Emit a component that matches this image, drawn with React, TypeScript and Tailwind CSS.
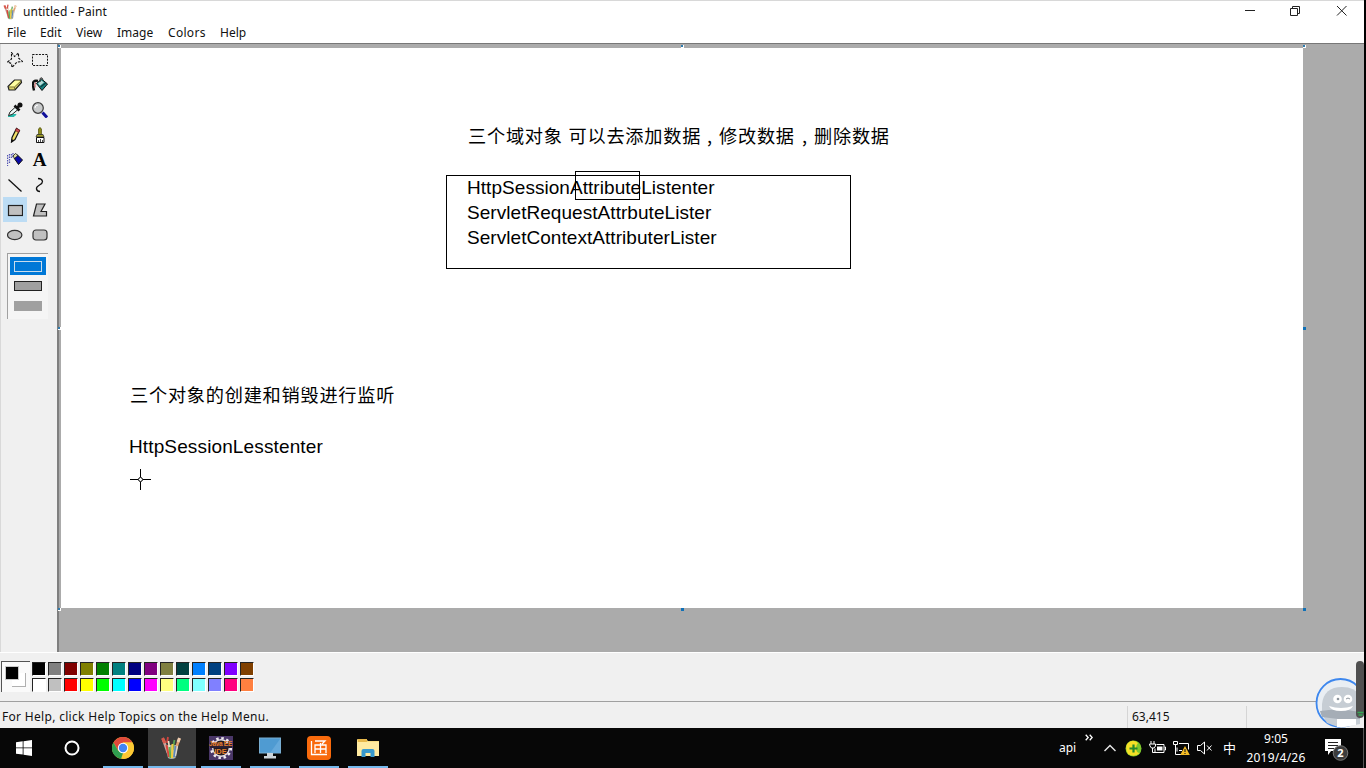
import React from "react";

const ui = "font-['Noto_Sans','Noto_Sans_CJK_SC',sans-serif]";

const swatches: [string, string][] = [
  ["#000000", "#ffffff"],
  ["#808080", "#c0c0c0"],
  ["#800000", "#ff0000"],
  ["#808000", "#ffff00"],
  ["#008000", "#00ff00"],
  ["#008080", "#00ffff"],
  ["#000080", "#0000ff"],
  ["#800080", "#ff00ff"],
  ["#808040", "#ffff80"],
  ["#004040", "#00ff80"],
  ["#0080ff", "#80ffff"],
  ["#004080", "#8080ff"],
  ["#8000ff", "#ff0080"],
  ["#804000", "#ff8040"],
];

function PaintLogo({ size }: { size: number }) {
  return (
    <svg width={size} height={size} viewBox="0 0 24 24" fill="none">
      <path d="M6 9h13l-2.500 13q-4 2-7.500 0z" fill="#a9b3ab" />
      <path d="M4 3l5 14" stroke="#c9a59c" strokeWidth="2.600" />
      <path d="M3.500 2l2.500 5" stroke="#d9584a" strokeWidth="3" />
      <path d="M9 1l-1 6" stroke="#d0443f" strokeWidth="1.800" />
      <path d="M9.500 5l1.500 12" stroke="#e9e2c8" strokeWidth="1.600" />
      <path d="M20.500 2.500l-4 11" stroke="#e0a070" strokeWidth="2.600" />
      <path d="M20.500 2l-1.500 4" stroke="#f0cdb0" strokeWidth="3" />
      <path d="M15.500 4l-2 10" stroke="#59a352" strokeWidth="1.800" />
      <path d="M7.500 9l2.500 12" stroke="#d9463c" strokeWidth="2" />
      <path d="M10.500 11l1 11" stroke="#5eb052" strokeWidth="2" />
      <path d="M13.500 8l-.5 14" stroke="#f0cc3f" strokeWidth="2" />
      <path d="M16.500 10l-1.500 11" stroke="#5a86ba" strokeWidth="1.600" />
      <path d="M18.500 10l-2 10" stroke="#dcd7cf" strokeWidth="1.300" />
    </svg>
  );
}

const tools: { name: string; art: React.ReactNode }[] = [
  {
    name: "Free-form select",
    art: (
      <path d="M4.500 .5L7.500 4.500 11.500 1V6L15.500 9.500 10 10 5 15.500 4.500 11.500.5 10 4.500 7z" fill="none" stroke="#111" strokeWidth="1.100" strokeDasharray="2.500 1.300" />
    ),
  },
  { name: "Select", art: <rect x=".5" y="2.500" width="15" height="11" fill="none" stroke="#111" strokeDasharray="2 1.200" /> },
  {
    name: "Eraser",
    art: (
      <>
        <path d="M1 9.500L7.500 3h6.500l.5 2.500L8 13H2z" fill="#dcd36a" stroke="#222" strokeWidth="1.200" />
        <path d="M2 9.500L8 3.700h5.500L7.500 9.500z" fill="#ffffa0" />
        <path d="M2 10h5.500L14 4M7.500 10v2.500" fill="none" stroke="#6c6730" strokeWidth=".8" />
      </>
    ),
  },
  {
    name: "Fill",
    art: (
      <>
        <path d="M4.500 6.500L9.500 2l6 5-5.500 6.500z" fill="#168080" stroke="#111" />
        <path d="M6 6.500l3.500-3 2.500 2-4 3.200z" fill="#b8dcd8" />
        <path d="M8.500 10l5.500-4.300" stroke="#0a3c3c" strokeWidth="1.200" />
        <path d="M8 5V1.500q2-2 3 1" fill="none" stroke="#333" />
        <path d="M6 4Q0 2.500 1 9l1 4.500" fill="none" stroke="#111" strokeWidth="2.400" />
        <path d="M3.500 5.500q-1 2-.5 5" stroke="#b64040" fill="none" />
      </>
    ),
  },
  {
    name: "Pick color",
    art: (
      <>
        <path d="M1 14.500h6l2-2H4z" fill="#26baaa" stroke="#26baaa" />
        <path d="M1.500 13.500l1.500-3.500 5.500-5 2.500 2.500-6 5z" fill="#eefaf8" stroke="#222" />
        <path d="M7.500 3.500l5 5M10 6l3-3" stroke="#111" strokeWidth="2.600" />
        <circle cx="13" cy="3" r="2.500" fill="#111" />
      </>
    ),
  },
  {
    name: "Magnifier",
    art: (
      <>
        <path d="M10.500 10.500l4.500 5" stroke="#10109a" strokeWidth="3" />
        <circle cx="6" cy="6" r="5.300" fill="#c9cbcc" stroke="#3d3d3d" strokeWidth="1.200" />
        <path d="M3 6q0-3 3-3" stroke="#fff" fill="none" />
      </>
    ),
  },
  {
    name: "Pencil",
    art: (
      <>
        <path d="M5 10.500l4.500-9 3 2-4.500 9-3.500 2.500z" fill="#f2e06a" stroke="#111" strokeWidth="1.200" />
        <path d="M9.500 1.500l3 1.500-1 2.500-3-2z" fill="#d5575d" stroke="#7c1a20" strokeWidth=".8" />
        <path d="M4 15.500l.5-3.500 2.500 1.500z" fill="#111" />
      </>
    ),
  },
  {
    name: "Brush",
    art: (
      <>
        <path d="M6.700 8V2q1.300-3 2.600 0v6z" fill="#9c9a20" stroke="#5a590e" />
        <path d="M5 7.500h6l1 2.500H4z" fill="#a5a32a" stroke="#333" strokeWidth=".8" />
        <path d="M4.500 10.500h7.500V15.500H4.500z" fill="#fff" stroke="#111" />
        <path d="M6.500 13v2M8.500 12v3M10.500 13v2" stroke="#222" strokeWidth=".8" />
      </>
    ),
  },
  {
    name: "Airbrush",
    art: (
      <>
        <path d="M.5 3v11M2.500 2v9M4.500 2v5M6 1v5" stroke="#5556b4" strokeWidth="1.300" strokeDasharray="1.500 1" />
        <path d="M7 6l3.500-3 5 5-4 4.500z" fill="#0909a8" stroke="#111" />
        <path d="M6 4l2.500-2.500 2.500 2-3.500 3z" fill="#d8d9a5" stroke="#111" strokeWidth=".8" />
      </>
    ),
  },
  {
    name: "Text",
    art: null,
  },
  { name: "Line", art: <path d="M1.500 2.500l13 12" stroke="#111" strokeWidth="1.300" /> },
  { name: "Curve", art: <path d="M6 1.500q4 0 4.500 3 0 2-3 3.500-3.500 2-3 4 .5 2.500 3.500 2.500" fill="none" stroke="#111" strokeWidth="1.300" /> },
  { name: "Rectangle", art: <rect x="1.500" y="3.500" width="14" height="10" fill="#c0c0c0" stroke="#222" strokeWidth="1.200" /> },
  { name: "Polygon", art: <path d="M4.500 2h8.500l-4 7.500h5.500V14H1.500z" fill="#c0c0c0" stroke="#222" strokeWidth="1.200" /> },
  { name: "Ellipse", art: <ellipse cx="7.700" cy="8" rx="7.200" ry="4.700" fill="#c0c0c0" stroke="#333" strokeWidth="1.200" /> },
  { name: "Rounded rectangle", art: <rect x="1" y="3" width="14" height="10" rx="3" fill="#c0c0c0" stroke="#333" strokeWidth="1.200" /> },
];

function Toolbox() {
  return (
    <aside className="flex w-[57px] shrink-0 flex-col border-l border-[#d9d9d9] bg-[#f0f0f0] pt-[3px]">
      <div className="ml-[2px] grid w-[50px] grid-cols-[24px_25px] auto-rows-[25px]">
        {tools.map((t) => (
          <div
            key={t.name}
            title={t.name}
            className={
              t.name === "Rectangle"
                ? "flex items-center justify-center bg-[#bcdcf4]"
                : "flex items-center justify-center"
            }
          >
            {t.name === "Text" ? (
              <span className="font-['Liberation_Serif',serif] text-[19px] font-bold leading-[24px] text-[#050505]">A</span>
            ) : (
              <svg width="16" height="16" viewBox="0 0 16 16">
                {t.art}
              </svg>
            )}
          </div>
        ))}
      </div>
      <div className="ml-[6px] mt-[6px] flex h-[66px] w-[41px] flex-col items-center border-l border-t border-[#a0a0a0] bg-[#f5f5f5] pt-[3px]">
        <div className="flex h-[18px] w-[36px] items-center justify-center bg-[#0078d7]">
          <div className="h-[11px] w-[28px] border border-[#c9dcec]" />
        </div>
        <div className="mt-[6px] h-[10px] w-[28px] border border-[#222] bg-[#a0a0a0]" />
        <div className="mt-[10px] h-[10px] w-[28px] bg-[#a0a0a0]" />
      </div>
    </aside>
  );
}

function Canvas() {
  const latin = "absolute whitespace-pre font-['Liberation_Sans',sans-serif] text-[19px] leading-[25px] text-black";
  const cjk = "absolute whitespace-pre font-['Noto_Sans_CJK_SC',sans-serif] text-[18.2px] leading-[25px] text-black tracking-[0.75px]";
  return (
    <main className="relative min-w-0 flex-1 border-l-2 border-[#7f7f7f] bg-[#ababab] pl-[2px] pt-[4px]">
      <div className="relative h-[560px] w-[1242px] bg-white">
        <p className={`${cjk} left-[407px] top-[75px]`}>三个域对象 <span className="ml-px">可以去添加数据</span></p>
        <p className={`${cjk} left-[646px] top-[75px]`}>,</p>
        <p className={`${cjk} left-[658px] top-[75px]`}>修改数据</p>
        <p className={`${cjk} left-[741px] top-[75px]`}>,</p>
        <p className={`${cjk} left-[753px] top-[75px]`}>删除数据</p>
        <div className="absolute left-[385px] top-[127px] h-[94px] w-[405px] border border-black" />
        <div className="absolute left-[514px] top-[123px] h-[29px] w-[65px] border border-black" />
        <div className={`${latin} left-[406px] top-[127px] tracking-[0.05px]`}>
          <p>HttpSessionAttributeListenter</p>
          <p>ServletRequestAttrbuteLister</p>
          <p>ServletContextAttributerLister</p>
        </div>
        <p className={`${cjk} left-[69px] top-[334px]`}>三个对象的创建和销毁进行监听</p>
        <p className={`${latin} left-[68px] top-[386px] tracking-[0.13px]`}>HttpSessionLesstenter</p>
        <svg className="absolute left-[68px] top-[421px]" width="23" height="22" viewBox="0 0 23 22">
          <path d="M1 10.500h8M14 10.500h8M11.500 0v8M11.500 13v8" stroke="#000" />
          <circle cx="11.500" cy="10.500" r="2" fill="#fff" stroke="#000" />
        </svg>
        <i className="absolute -left-[3px] -top-[3px] size-[3px] border-b border-r border-white bg-[#2f7cae]" />
        <i className="absolute left-[620px] -top-[3px] size-[3px] border-b border-r border-white bg-[#2f7cae]" />
        <i className="absolute left-[1242px] -top-[3px] size-[3px] border-b border-r border-white bg-[#2f7cae]" />
        <i className="absolute -left-[3px] top-[279px] size-[3px] border-b border-r border-white bg-[#2f7cae]" />
        <i className="absolute left-[1242px] top-[279px] size-[3px] bg-[#0f70b7]" />
        <i className="absolute -left-[3px] top-[560px] size-[3px] border-b border-r border-white bg-[#2f7cae]" />
        <i className="absolute left-[620px] top-[560px] size-[3px] bg-[#0f70b7]" />
        <i className="absolute left-[1242px] top-[560px] size-[3px] bg-[#0f70b7]" />
      </div>
    </main>
  );
}

function Palette() {
  return (
    <section className="relative flex h-[49px] shrink-0 border-t border-white bg-[#f0f0f0] pl-px pt-[8px]">
      <div className="relative h-[31px] w-[29px] border-l border-t border-[#555] bg-[#fafafa]">
        <div className="absolute left-[10px] top-[11px] size-[14px] border-b border-r border-[#b0b0b0] bg-white" />
        <div className="absolute left-[3px] top-[4px] size-[14px] border border-[#c8c8c8] bg-black" />
      </div>
      <div className="ml-[2px] flex gap-[2px]">
        {swatches.map(([a, b]) => (
          <div key={a} className="flex flex-col gap-[2px] pt-px">
            <div className="size-[14px] border-b border-l border-r border-t border-b-white border-l-[#222] border-r-white border-t-[#222]" style={{ background: a }} />
            <div className="size-[14px] border-b border-l border-r border-t border-b-white border-l-[#222] border-r-white border-t-[#222]" style={{ background: b }} />
          </div>
        ))}
      </div>
    </section>
  );
}

function Assistant() {
  return (
    <div className="absolute left-[1314px] top-[660px] h-[68px] w-[50px] overflow-hidden">
      <svg width="50" height="68" viewBox="0 0 50 68">
        <circle cx="26.500" cy="43" r="24" fill="#e9eef3" stroke="#3d87ee" strokeWidth="1.800" />
        <path d="M8 54V44q2-17 20-17 13 0 18 9v28l-19 4-14-5z" fill="#c6cdd4" />
        <path d="M6 51q20-3 40 1v7H32l-8 0-16-2z" fill="#a5adb6" />
        <path d="M15 46q12 4 24 0-2 5-12 5-10 0-12-5z" fill="#fff" />
        <circle cx="23.500" cy="39" r="4.300" fill="#fff" />
        <circle cx="34" cy="39" r="4.300" fill="#fff" />
        <circle cx="24" cy="39" r="1.300" fill="#8b949c" />
        <path d="M32 39q2-2 4 0" stroke="#8b949c" fill="none" />
        <path d="M23 59h19v6l-12 2h-7z" fill="#fff" />
        <rect x="42" y="1" width="8" height="57" rx="4" fill="#505050" />
        <path d="M43.500 52.500h6M44.500 55h4" stroke="#34a853" strokeWidth="1.300" />
      </svg>
    </div>
  );
}

function TaskButton({ children, open, active, wide }: { children: React.ReactNode; open?: boolean; active?: boolean; wide?: boolean }) {
  const width = wide ? "w-[50px]" : active ? "w-[48px] bg-[#3b3b3b] pr-[2px]" : "w-[49px]";
  return (
    <div className={`relative flex h-full items-center justify-center ${width}`}>
      {children}
      {open && (
        <div
          className={
            active ? "absolute bottom-0 left-0 h-[2px] w-full bg-[#76b9ed]" : "absolute bottom-0 left-[5px] h-[2px] w-[40px] bg-[#76b9ed]"
          }
        />
      )}
    </div>
  );
}

function Taskbar() {
  return (
    <footer className="relative flex h-[40px] shrink-0 items-center bg-[#070707] text-white">
      <div className="flex h-full w-[48px] items-center justify-center">
        <svg width="16" height="16" viewBox="0 0 16 16" fill="#fff">
          <path d="M0 2.300L6.700 1.300V7.500H0zM7.500 1.200L16 0V7.500H7.500zM0 8.300H6.700V14.600L0 13.700zM7.500 8.300H16V16L7.500 14.800z" />
        </svg>
      </div>
      <div className="flex h-full w-[50px] items-center justify-center pr-[2px]">
        <svg width="16" height="16" viewBox="0 0 16 16">
          <circle cx="8" cy="8" r="6.500" fill="none" stroke="#fff" strokeWidth="2" />
        </svg>
      </div>
      <TaskButton open wide>
        <svg width="22" height="22" viewBox="0 0 22 22">
          <circle cx="11" cy="11" r="11" fill="#fcc934" />
          <path d="M1.500 5.500A11 11 0 0 1 20.500 5.500H11L6.200 13.700z" fill="#e04a3b" />
          <path d="M1.500 5.500L6.200 13.700 11 16l-2 6A11 11 0 0 1 1.500 5.500z" fill="#2f9e4f" />
          <path d="M20.500 5.500H11l5 8.200L11 22A11 11 0 0 0 20.500 5.500z" fill="#fcc934" />
          <circle cx="11" cy="11" r="5.200" fill="#fff" />
          <circle cx="11" cy="11" r="4.200" fill="#4285f4" />
        </svg>
      </TaskButton>
      <TaskButton open active>
        <PaintLogo size={24} />
      </TaskButton>
      <TaskButton open>
        <div className="relative size-[24px]">
          <svg width="24" height="24" viewBox="0 0 24 24">
            <rect width="24" height="24" fill="#4a3768" />
            <circle cx="12" cy="12" r="9.800" fill="none" stroke="#f1edf0" strokeWidth="2.600" strokeDasharray="2.500 2.630" />
            <circle cx="12" cy="12" r="8.300" fill="#221b22" stroke="#e6e0e6" strokeWidth="1.400" />
            <path d="M1 7h22v5H1z" fill="#2c1f33" />
          </svg>
          <div className="absolute left-0 top-[4px] flex w-[24px] flex-col items-center whitespace-nowrap font-['Liberation_Sans',sans-serif] text-[6.5px] font-bold leading-[8px] text-[#e8812e]">
            <span className="tracking-[-0.3px]">Java EE</span>
            <span className="text-[7.5px]">IDE</span>
          </div>
        </div>
      </TaskButton>
      <TaskButton open>
        <svg width="22" height="22" viewBox="0 0 22 22">
          <rect x=".5" y="1" width="21" height="15" fill="#4f9bd2" stroke="#79aed2" />
          <path d="M11 16L21 2v14z" fill="#65a9db" />
          <path d="M8 16h6v3h3v2.500H5V19h3z" fill="#cbd3d9" />
        </svg>
      </TaskButton>
      <TaskButton open>
        <svg width="24" height="24" viewBox="0 0 24 24">
          <rect width="24" height="24" rx="4" fill="#f96a0c" />
          <path d="M8 5h10l-3 3M4.500 5v13.500H20M8 17V9h11v8M8 13h11M13.500 7v10" fill="none" stroke="#fff" strokeWidth="1.300" />
        </svg>
      </TaskButton>
      <TaskButton open>
        <svg width="22" height="20" viewBox="0 0 22 20">
          <path d="M0 2q0-1 1-1h8l2 2h11v15H0z" fill="#f8dc83" />
          <path d="M1 1h9v3H1z" fill="#e7b84b" />
          <path d="M0 4h22v14H0z" fill="#ffeaa0" />
          <path d="M4.500 19v-6q0-2 2-2h9q2 0 2 2v6h-4v-4h-5v4z" fill="#3899cd" />
        </svg>
      </TaskButton>
      <div className={`ml-auto flex h-full items-center text-[12px] ${ui}`}>
        <span className="w-[26px] leading-none">api</span>
        <svg className="mb-[21px]" width="8" height="7" viewBox="0 0 8 7">
          <path d="M.7.7l2.500 2.800L.7 6.300M4.700.7l2.500 2.800-2.500 2.800" fill="none" stroke="#fff" strokeWidth="1.300" />
        </svg>
        <svg className="ml-[11px]" width="12" height="8" viewBox="0 0 12 8">
          <path d="M.5 7L6 1.500 11.500 7" fill="none" stroke="#e8e8e8" strokeWidth="1.400" />
        </svg>
        <svg className="ml-[9px]" width="17" height="17" viewBox="0 0 17 17">
          <circle cx="8.500" cy="8.500" r="8" fill="#7dc82c" />
          <path d="M2 4q5-6 11-1-2 2-2 5 0 5 4 5-6 5-12 1-3-5-1-10z" fill="#f5df26" />
          <path d="M8.500 4.500v8M4.500 8.500h8" stroke="#25892b" strokeWidth="2.200" />
        </svg>
        <svg className="ml-[7px]" width="17" height="14" viewBox="0 0 17 14" fill="none" stroke="#fff">
          <path d="M2 0v3M5 0v3M.5 3h6v2l-1.500 2H2.500L1 5zM3.500 7v4.500H6" />
          <path d="M7.500 3.500h7.500v8H6v-4M15.500 6h1v3h-1" />
          <path d="M8 5.500h5.500v4H8z" fill="#fff" stroke="none" />
        </svg>
        <svg className="ml-[7px]" width="17" height="15" viewBox="0 0 17 15" fill="none">
          <path d="M6 2.500h9.500v6M6 9.500h3M.5.500h4v3h-4zM2.500 4v9.500H9M4 6.500v4" stroke="#fff" />
          <path d="M12 5l4.800 9H7.200z" fill="#f4bc25" />
          <path d="M12 8v3M12 12v1" stroke="#222" strokeWidth="1.200" />
        </svg>
        <svg className="ml-[7px]" width="16" height="14" viewBox="0 0 16 14" fill="none" stroke="#fff">
          <path d="M.5 4.500h3L7.500 1v12L3.500 9.500h-3zM10 4.500l4.500 5M14.500 4.500l-4.500 5" />
        </svg>
        <span className="ml-[10px] w-[13px] text-[13px] leading-none">中</span>
        <div className="ml-[7px] flex w-[66px] flex-col items-center whitespace-nowrap text-[12px] leading-[19px]">
          <span>9:05</span>
          <span className="tracking-[0.25px]">2019/4/26</span>
        </div>
        <svg className="ml-[15px] mr-[12px]" width="27" height="26" viewBox="0 0 27 26">
          <path d="M1 4h16v12H7l-3 4v-4H1z" fill="#fff" />
          <path d="M4 7.500h10M4 10.500h10M4 13.500h6" stroke="#222" />
          <circle cx="16.500" cy="18" r="7.300" fill="#3c3c3c" stroke="#777" />
          <text x="16.500" y="22" textAnchor="middle" fontSize="11" fontWeight="bold" fontFamily="Noto Sans" fill="#fff">2</text>
        </svg>
      </div>
      <div className="h-full w-[3px] border-l border-[#555]" />
    </footer>
  );
}

export default function App() {
  return (
    <div className={`relative flex h-[768px] w-[1366px] flex-col overflow-hidden bg-white text-[12px] text-[#111] ${ui}`}>
      <div className="flex h-[728px] w-full flex-col border-r-2 border-black">
        <header className="flex h-[23px] shrink-0 items-center border-t border-[#d8d8d8] pl-[2px]">
          <PaintLogo size={16} />
          <span className="ml-[5px] tracking-[0.07px]">untitled - Paint</span>
          <div className="ml-auto flex items-center pb-[2px] pr-[15px]">
            <svg width="104" height="12" viewBox="0 0 104 12" fill="none" stroke="#222">
              <path d="M0 5.500h10" />
              <path d="M45.500 3.500h7v7h-7zM47.500 3.500v-2h7v7h-2" />
              <path d="M92 1l9.500 9.500M101.500 1L92 10.500" />
            </svg>
          </div>
        </header>
        <nav className="flex h-[20px] shrink-0 items-center pl-[7px]">
          <span className="w-[33px]">File</span>
          <span className="w-[36px]">Edit</span>
          <span className="w-[41px]">View</span>
          <span className="w-[51px]">Image</span>
          <span className="w-[52px] tracking-[0.3px]">Colors</span>
          <span>Help</span>
        </nav>
        <div className="flex h-[609px] shrink-0 border-t border-[#777]">
          <Toolbox />
          <Canvas />
        </div>
        <Palette />
        <div className="flex h-[27px] shrink-0 items-center border-t border-[#a0a0a0] bg-[#f0f0f0] pl-[2px] pt-[3px]">
          <span className="w-[1125px] tracking-[0.31px]">For Help, click Help Topics on the Help Menu.</span>
          <span className="flex h-[22px] w-[119px] items-center border-l border-[#d5d5d5] pl-[4px]">63,415</span>
          <span className="h-[22px] border-l border-[#d5d5d5]" />
        </div>
      </div>
      <Taskbar />
      <Assistant />
    </div>
  );
}
